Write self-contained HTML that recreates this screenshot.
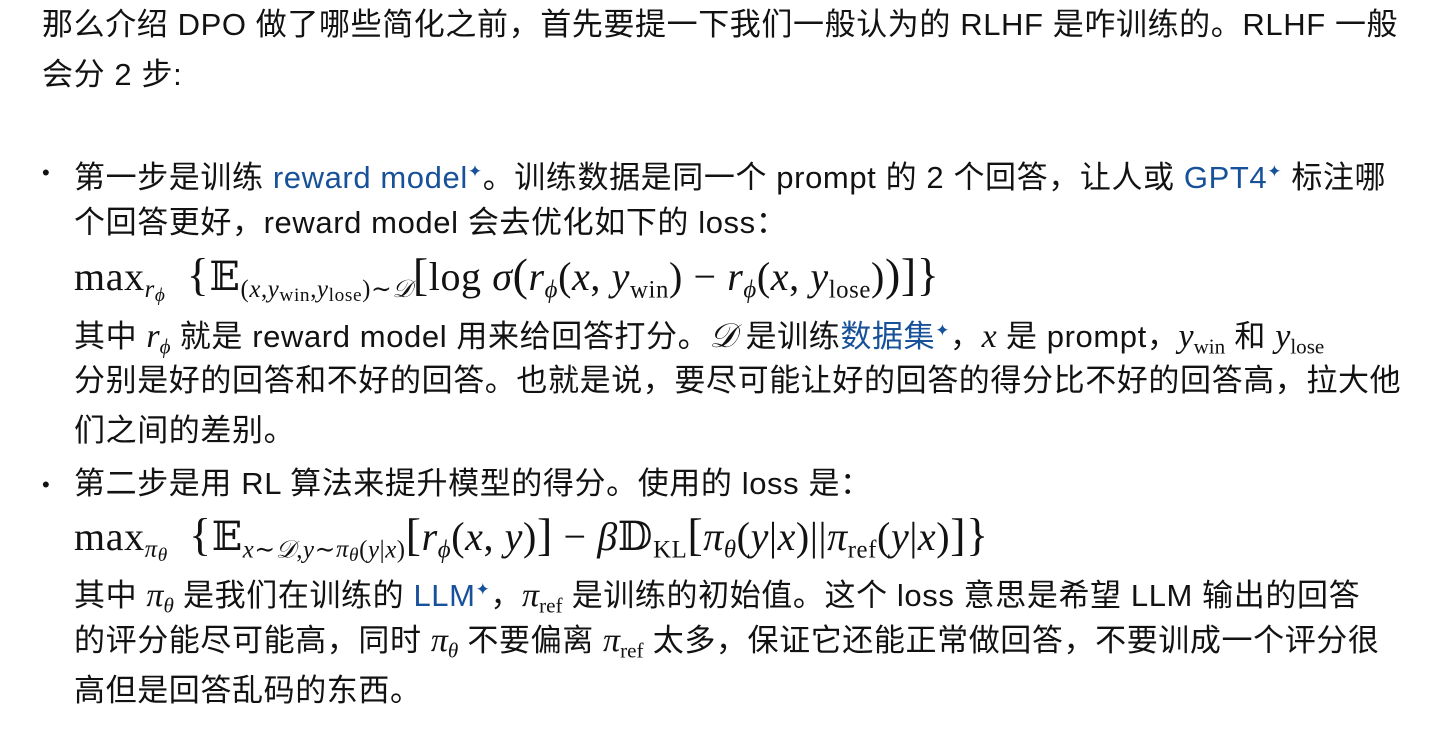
<!DOCTYPE html>
<html><head><meta charset="utf-8">
<style>
body{margin:0;background:#fff;width:1448px;height:734px;overflow:hidden;position:relative;font-family:"Liberation Sans","Noto Sans CJK SC",sans-serif;color:#121212;font-size:31px;letter-spacing:0.6px}
.l{position:absolute;white-space:nowrap;line-height:50px;height:50px}
a{color:#175199;text-decoration:none}
sup.s{font-size:17px;color:#175199;vertical-align:11px}
.m{font-family:"Liberation Serif","DejaVu Serif",serif;font-size:34px;letter-spacing:0}
.f{font-size:40px;letter-spacing:0.6px}
.i{font-style:italic}
sub{font-size:0.62em;vertical-align:-0.3em}
sub sub{font-size:0.78em;vertical-align:-0.2em}
.b{position:absolute;left:42px;font-size:22px}
.big{font-size:1.15em}
</style></head><body>
<div class="l" style="left:42px;top:0">那么介绍 DPO 做了哪些简化之前，首先要提一下我们一般认为的 RLHF 是咋训练的。RLHF 一般</div>
<div class="l" style="left:42px;top:50px">会分 2 步:</div>

<div class="b" style="top:160px">•</div>
<div class="l" style="left:74px;top:147px">第一步是训练 <a>reward model</a><sup class="s">✦</sup>。训练数据是同一个 prompt 的 2 个回答，让人或 <a>GPT4</a><sup class="s">✦</sup> 标注哪</div>
<div class="l" style="left:74px;top:198px">个回答更好，reward model 会去优化如下的 loss：</div>
<div class="l m f" style="left:74px;top:250px">max<sub><span class="i">r</span><sub class="i">ϕ</sub></sub> &nbsp;<span class="big">{</span>𝔼<sub>(<span class="i">x</span>,<span class="i">y</span><sub>win</sub>,<span class="i">y</span><sub>lose</sub>)∼<span class="i">𝒟</span></sub><span class="big">[</span>log <span class="i">σ</span><span class="big">(</span><span class="i">r</span><sub class="i">ϕ</sub>(<span class="i">x</span>, <span class="i">y</span><sub>win</sub>) − <span class="i">r</span><sub class="i">ϕ</sub>(<span class="i">x</span>, <span class="i">y</span><sub>lose</sub>)<span class="big">)]}</span></div>
<div class="l" style="left:74px;top:306px">其中 <span class="m i">r<sub>ϕ</sub></span> 就是 reward model 用来给回答打分。<span class="m i">𝒟</span> 是训练<a>数据集</a><sup class="s">✦</sup>，<span class="m i">x</span> 是 prompt，<span class="m"><span class="i">y</span><sub>win</sub></span> 和 <span class="m"><span class="i">y</span><sub>lose</sub></span></div>
<div class="l" style="left:74px;top:356px">分别是好的回答和不好的回答。也就是说，要尽可能让好的回答的得分比不好的回答高，拉大他</div>
<div class="l" style="left:74px;top:406px">们之间的差别。</div>

<div class="b" style="top:472px">•</div>
<div class="l" style="left:74px;top:459px">第二步是用 RL 算法来提升模型的得分。使用的 loss 是：</div>
<div class="l m f" style="left:74px;top:510px">max<sub><span class="i">π</span><sub class="i">θ</sub></sub> &nbsp;<span class="big">{</span>𝔼<sub><span class="i">x</span>∼<span class="i">𝒟</span>,<span class="i">y</span>∼<span class="i">π<sub>θ</sub></span>(<span class="i">y</span>|<span class="i">x</span>)</sub><span class="big">[</span><span class="i">r</span><sub class="i">ϕ</sub>(<span class="i">x</span>, <span class="i">y</span>)<span class="big">]</span> − <span class="i">β</span>𝔻<sub>KL</sub><span class="big">[</span><span class="i">π</span><sub class="i">θ</sub>(<span class="i">y</span>|<span class="i">x</span>)||<span class="i">π</span><sub>ref</sub>(<span class="i">y</span>|<span class="i">x</span>)<span class="big">]}</span></div>
<div class="l" style="left:74px;top:565px">其中 <span class="m"><span class="i">π</span><sub class="i">θ</sub></span> 是我们在训练的 <a>LLM</a><sup class="s">✦</sup>，<span class="m"><span class="i">π</span><sub>ref</sub></span> 是训练的初始值。这个 loss 意思是希望 LLM 输出的回答</div>
<div class="l" style="left:74px;top:616px">的评分能尽可能高，同时 <span class="m"><span class="i">π</span><sub class="i">θ</sub></span> 不要偏离 <span class="m"><span class="i">π</span><sub>ref</sub></span> 太多，保证它还能正常做回答，不要训成一个评分很</div>
<div class="l" style="left:74px;top:666px">高但是回答乱码的东西。</div>
</body></html>
